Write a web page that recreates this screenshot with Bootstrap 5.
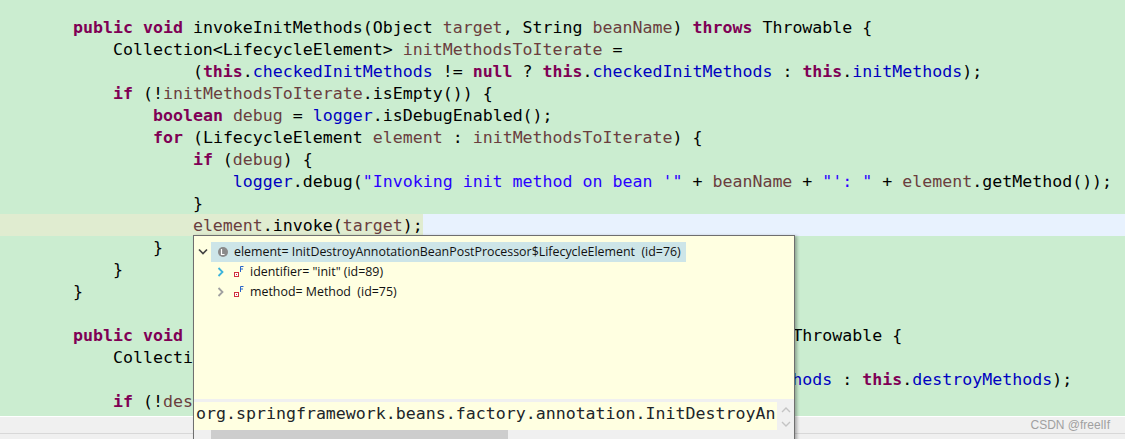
<!DOCTYPE html>
<html lang="en">
<head>
<meta charset="utf-8">
<title>Debugger</title>
<link href="https://cdn.jsdelivr.net/npm/bootstrap@5.3.0/dist/css/bootstrap.min.css" rel="stylesheet">
<style>
html,body{height:439px;overflow:hidden;margin:0}
body{background:#f0f0f0}
.editor-pane{position:relative;width:1125px;height:439px;overflow:hidden;background:#cbedd0}
.code-block{padding:16px 0 0 73px;height:416px;overflow:hidden;font-family:"DejaVu Sans Mono","Liberation Mono",monospace;font-size:16.6px;line-height:24px;color:#000}
.code-row{height:22px;white-space:pre}
.cur-row{margin-left:-73px;padding-left:73px;background:linear-gradient(90deg,#e0ecd0 423px,#e8f2fe 423px)}
.kw{color:#7f0055;font-weight:700}
.lv{color:#6a3e3e}
.fd{color:#0000c0}
.st{color:#2a00ff}
.foot-bar{height:23px;background:#f0f0f0;border-top:1px solid #fff;position:relative}
.foot-line{position:absolute;left:0;right:0;top:16px;height:1px;background:#d8d8d8}
.wm{position:absolute;right:15px;top:0;font:12px/16px "Liberation Sans",sans-serif;color:#a0a0a0}
.hover-pop{position:absolute;left:193px;top:235px;width:602px;height:210px;background:#ffffe1;border:1px solid #6f6f6f;box-shadow:2px 1px 3px rgba(0,0,0,.3);display:flex;flex-direction:column}
.tree-area{height:163px;padding:6px 0 0 0;font:12.4px/20px "Open Sans","Liberation Sans",sans-serif;color:#111}
.tree-row{height:20px;white-space:pre;display:flex;align-items:center}
.tree-top{height:19.5px}
.tree-sel{background:#cde5e8;width:475px;height:20px}
.tw{width:17px;height:20px;flex:none;display:flex;align-items:center;justify-content:center}
.nd{width:23px;height:20px;flex:none;display:flex;align-items:center;justify-content:center}
.nd-kid{width:21px;height:20px;flex:none;display:flex;align-items:center;padding-left:3px}
.ps-kid{padding-left:18px}
.detail-row{display:flex;background:#f0f0f0;padding-top:3px;height:31px}
.detail-text{flex:1;background:#ffffe1;padding-left:2px;font-family:"DejaVu Sans Mono","Liberation Mono",monospace;font-size:16.6px;line-height:24px;white-space:pre;overflow:hidden;height:28px}
.vscroll{width:17px;flex:none;background:#f0f0f0;display:flex;flex-direction:column;align-items:center;gap:8px;padding:5px 0 0}
.hscroll{display:flex;height:12px;background:#f0f0f0}
.harrow{width:17px;flex:none;padding:3px 0 0 5px}
.hthumb{width:297px;height:12px;background:#cdcdcd}
.hgap{flex:1}
.harrow-r{width:28px;flex:none;padding-top:3px}
</style>
</head>
<body>
<div class="editor-pane">
<div class="code-block">
<div class="code-row"><span class="kw">public</span> <span class="kw">void</span> invokeInitMethods(Object <span class="lv">target</span>, String <span class="lv">beanName</span>) <span class="kw">throws</span> Throwable {</div>
<div class="code-row">    Collection&lt;LifecycleElement&gt; <span class="lv">initMethodsToIterate</span> =</div>
<div class="code-row">            (<span class="kw">this</span>.<span class="fd">checkedInitMethods</span> != <span class="kw">null</span> ? <span class="kw">this</span>.<span class="fd">checkedInitMethods</span> : <span class="kw">this</span>.<span class="fd">initMethods</span>);</div>
<div class="code-row">    <span class="kw">if</span> (!<span class="lv">initMethodsToIterate</span>.isEmpty()) {</div>
<div class="code-row">        <span class="kw">boolean</span> <span class="lv">debug</span> = <span class="fd">logger</span>.isDebugEnabled();</div>
<div class="code-row">        <span class="kw">for</span> (LifecycleElement <span class="lv">element</span> : <span class="lv">initMethodsToIterate</span>) {</div>
<div class="code-row">            <span class="kw">if</span> (<span class="lv">debug</span>) {</div>
<div class="code-row">                <span class="fd">logger</span>.debug(<span class="st">"Invoking init method on bean '"</span> + <span class="lv">beanName</span> + <span class="st">"': "</span> + <span class="lv">element</span>.getMethod());</div>
<div class="code-row">            }</div>
<div class="code-row cur-row">            <span class="lv">element</span>.invoke(<span class="lv">target</span>);</div>
<div class="code-row">        }</div>
<div class="code-row">    }</div>
<div class="code-row">}</div>
<div class="code-row"> </div>
<div class="code-row"><span class="kw">public</span> <span class="kw">void</span> invokeDestroyMethods(Object <span class="lv">target</span>, String <span class="lv">beanName</span>) <span class="kw">throws</span> Throwable {</div>
<div class="code-row">    Collection&lt;LifecycleElement&gt; <span class="lv">destroyMethodsToUse</span> =</div>
<div class="code-row">            (<span class="kw">this</span>.<span class="fd">checkedDestroyMethods</span> != <span class="kw">null</span> ? <span class="kw">this</span>.<span class="fd">checkedDestroyMethods</span> : <span class="kw">this</span>.<span class="fd">destroyMethods</span>);</div>
<div class="code-row">    <span class="kw">if</span> (!<span class="lv">des</span></div>
</div>
<div class="foot-bar"><div class="foot-line"></div><span class="wm">CSDN @freelIf</span></div>

<div class="hover-pop">
  <div class="tree-area">
    <div class="tree-row tree-top"><span class="tw"><svg width="10" height="8" viewBox="0 0 10 8"><path d="M1 1.5 5 5.5 9 1.5" fill="none" stroke="#444" stroke-width="1.7"/></svg></span><div class="tree-row tree-sel"><span class="nd"><svg width="12" height="12" viewBox="0 0 12 12"><circle cx="6" cy="6" r="5" fill="#8a8a8a"/><path d="M4.5 3v5.5h3" fill="none" stroke="#fff" stroke-width="1.2"/></svg></span>element= InitDestroyAnnotationBeanPostProcessor$LifecycleElement  (id=76)</div></div>
    <div class="tree-row ps-kid"><span class="tw"><svg width="8" height="10" viewBox="0 0 8 10"><path d="M1.5 1 5.5 5 1.5 9" fill="none" stroke="#3cb4dc" stroke-width="1.8"/></svg></span><span class="nd-kid"><svg width="14" height="14" viewBox="0 0 14 14"><rect x="2.5" y="7.5" width="4" height="4" fill="#fff" stroke="#d0303c"/><rect x="4" y="9" width="1" height="1" fill="#d0303c"/><path d="M8.5 7V1.5h3M8.5 4h2.5" fill="none" stroke="#2864c8"/></svg></span>identifier= "init" (id=89)</div>
    <div class="tree-row ps-kid"><span class="tw"><svg width="8" height="10" viewBox="0 0 8 10"><path d="M1.5 1 5.5 5 1.5 9" fill="none" stroke="#a0a0a0" stroke-width="1.8"/></svg></span><span class="nd-kid"><svg width="14" height="14" viewBox="0 0 14 14"><rect x="2.5" y="7.5" width="4" height="4" fill="#fff" stroke="#d0303c"/><rect x="4" y="9" width="1" height="1" fill="#d0303c"/><path d="M8.5 7V1.5h3M8.5 4h2.5" fill="none" stroke="#2864c8"/></svg></span>method= Method  (id=75)</div>
  </div>
  <div class="detail-row">
    <div class="detail-text">org.springframework.beans.factory.annotation.InitDestroyAn</div>
    <div class="vscroll"><svg width="10" height="6" viewBox="0 0 10 6"><path d="M1 5 5 1 9 5" fill="none" stroke="#c4c4c4" stroke-width="1.4"/></svg><svg width="10" height="6" viewBox="0 0 10 6"><path d="M1 1 5 5 9 1" fill="none" stroke="#c4c4c4" stroke-width="1.4"/></svg></div>
  </div>
  <div class="hscroll"><span class="harrow"><svg width="6" height="10" viewBox="0 0 6 10"><path d="M5 1 1 5 5 9" fill="none" stroke="#444" stroke-width="1.4"/></svg></span><div class="hthumb"></div><div class="hgap"></div><span class="harrow-r"><svg width="6" height="10" viewBox="0 0 6 10"><path d="M1 1 5 5 1 9" fill="none" stroke="#444" stroke-width="1.4"/></svg></span></div>
</div>
</div>
<script src="https://cdn.jsdelivr.net/npm/bootstrap@5.3.0/dist/js/bootstrap.bundle.min.js"></script>
</body>
</html>
